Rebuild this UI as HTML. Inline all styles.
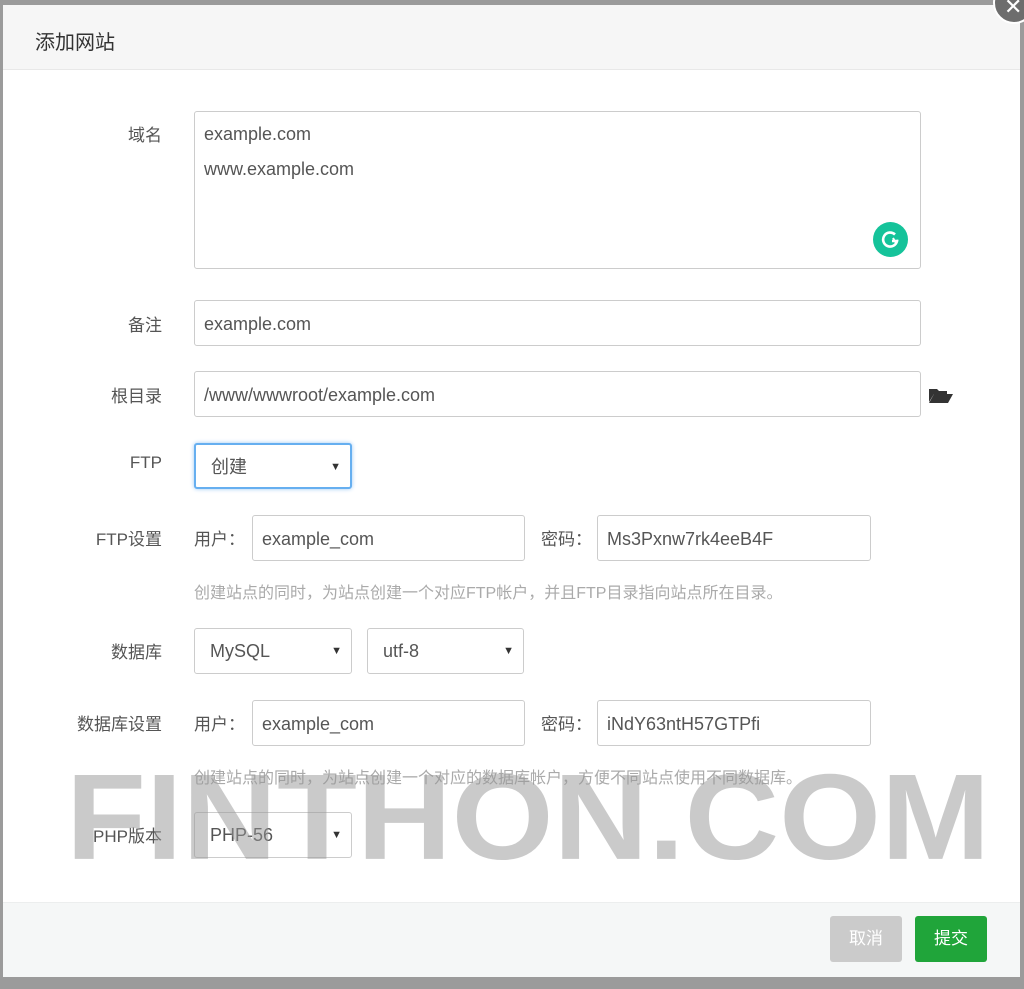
<!DOCTYPE html>
<html><head><meta charset="utf-8"><style>
*{box-sizing:border-box;margin:0;padding:0}
body{width:1024px;height:989px;background:#9b9b9b;position:relative;overflow:hidden;font-family:"Liberation Sans","Noto Sans CJK SC",sans-serif;color:#555}
.m{position:absolute;left:3px;top:5px;width:1017px;height:972px;background:#fff}
.hd{position:absolute;left:0;top:0;width:100%;height:65px;background:#f6f6f6;border-bottom:1px solid #e8e8e8}
.hd span{position:absolute;left:32px;top:21px;font-size:20px;color:#333}
.ft{position:absolute;left:0;top:897px;width:100%;height:75px;background:#f5f7f7;border-top:1px solid #eceeee}
.a{position:absolute}
.lb{position:absolute;font-size:17px;color:#555;text-align:right;width:160px;left:2px}
.in{position:absolute;border:1.5px solid #ccc;border-radius:3px;background:#fff;font-size:18px;color:#555;padding-left:9px;line-height:46px;height:46px}
.sel{position:absolute;border:1.5px solid #ccc;border-radius:3px;background:#fff;font-size:18px;color:#555;padding-left:15px;line-height:45px;height:46px}
.sel:after{content:"▼";position:absolute;right:9px;top:0;font-size:11px;color:#333}
.hint{position:absolute;left:194px;font-size:16px;color:#aaa}
.sm{position:absolute;font-size:17px;color:#555}
.btn{position:absolute;top:916px;height:46px;width:72px;border-radius:3px;color:#fff;font-size:17px;text-align:center;line-height:46px}
.wm{position:absolute;left:66px;top:746px;font-size:131px;font-weight:bold;color:rgba(150,150,150,0.5);line-height:140px;white-space:nowrap;transform:scaleY(0.93);transform-origin:0 60%}
</style></head><body>
<div class="m"><div class="hd"><span>添加网站</span></div><div class="ft"></div></div>
<div class="a" style="left:993px;top:-18px;width:42px;height:42px;border-radius:50%;background:#6d6d6d;border:2px solid #fff"></div>
<div class="a" style="left:1004px;top:-6px;color:#fff;font-size:22px">✕</div>

<div class="lb" style="top:121px">域名</div>
<div class="in" style="left:194px;top:111px;width:727px;height:158px;line-height:35px;padding-top:5px">example.com<br>www.example.com</div>
<div class="a" style="left:873px;top:222px;width:35px;height:35px;border-radius:50%;background:#15c39a"></div>
<svg class="a" style="left:879px;top:228px" width="23" height="23" viewBox="0 0 23 23"><path d="M16 6.5A7 7 0 1 0 18 13h-5" fill="none" stroke="#fff" stroke-width="2.6"/><path d="M14 10l2 3.5 3-1" fill="none" stroke="#fff" stroke-width="2"/></svg>

<div class="lb" style="top:311px">备注</div>
<div class="in" style="left:194px;top:300px;width:727px">example.com</div>

<div class="lb" style="top:382px">根目录</div>
<div class="in" style="left:194px;top:371px;width:727px">/www/wwwroot/example.com</div>
<svg class="a" style="left:928px;top:386px" width="25" height="18" viewBox="0 0 25 18"><path d="M1 3h8l2 2h8v3H6L1 16z" fill="#333"/><path d="M6 8h19l-5 9H1z" fill="#333"/></svg>

<div class="lb" style="top:453px">FTP</div>
<div class="sel" style="left:194px;top:443px;width:158px;border:2px solid #66aff0;box-shadow:0 0 4px #9cc8f5">创建</div>

<div class="lb" style="top:525px">FTP设置</div>
<div class="sm" style="left:194px;top:525px">用户：</div>
<div class="in" style="left:252px;top:515px;width:273px">example_com</div>
<div class="sm" style="left:541px;top:525px">密码：</div>
<div class="in" style="left:597px;top:515px;width:274px">Ms3Pxnw7rk4eeB4F</div>
<div class="hint" style="top:579px">创建站点的同时，为站点创建一个对应FTP帐户，并且FTP目录指向站点所在目录。</div>

<div class="lb" style="top:638px">数据库</div>
<div class="sel" style="left:194px;top:628px;width:158px">MySQL</div>
<div class="sel" style="left:367px;top:628px;width:157px">utf-8</div>

<div class="lb" style="top:710px">数据库设置</div>
<div class="sm" style="left:194px;top:710px">用户：</div>
<div class="in" style="left:252px;top:700px;width:273px">example_com</div>
<div class="sm" style="left:541px;top:710px">密码：</div>
<div class="in" style="left:597px;top:700px;width:274px">iNdY63ntH57GTPfi</div>
<div class="hint" style="top:764px">创建站点的同时，为站点创建一个对应的数据库帐户，方便不同站点使用不同数据库。</div>

<div class="lb" style="top:822px">PHP版本</div>
<div class="sel" style="left:194px;top:812px;width:158px">PHP-56</div>

<div class="wm">FINTHON.COM</div>

<div class="btn" style="left:830px;background:#cbcbcb">取消</div>
<div class="btn" style="left:915px;background:#20a53a">提交</div>
</body></html>
